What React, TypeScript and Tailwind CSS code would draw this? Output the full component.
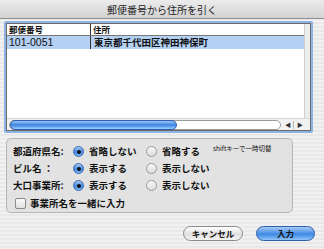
import React from 'react';

const Radio: React.FC<{ checked?: boolean; label: string }> = ({ checked, label }) => (
  <div className="flex items-center gap-[5px] whitespace-nowrap">
    {checked ? (
      <span className="flex h-[11px] w-[11px] shrink-0 items-center justify-center rounded-full border border-[#3a68b0] bg-[linear-gradient(#a9cdf5,#3f86e0_55%,#7fb8f5)]">
        <span className="h-[4px] w-[4px] rounded-full bg-[#111]" />
      </span>
    ) : (
      <span className="h-[11px] w-[11px] shrink-0 rounded-full border border-[#9a9a9a] bg-[linear-gradient(#f8f8f8,#dcdcdc)]" />
    )}
    <span>{label}</span>
  </div>
);

const Row: React.FC<{ label: string; a: string; b: string; checkedFirst?: boolean; note?: string }> = ({
  label,
  a,
  b,
  checkedFirst = true,
  note,
}) => (
  <div className="flex h-[17px] items-center whitespace-nowrap">
    <span className="w-[60px]">{label}</span>
    <div className="w-[73px]">
      <Radio checked={checkedFirst} label={a} />
    </div>
    <div className="w-[67px]">
      <Radio label={b} />
    </div>
    {note && <span className="-mt-[6px] text-[6.5px] font-normal">{note}</span>}
  </div>
);

export default function App() {
  return (
    <div
      className="flex h-[249px] w-[324px] flex-col overflow-hidden bg-[repeating-linear-gradient(#f1f1f1_0px,#f1f1f1_2px,#e9e9e9_2px,#e9e9e9_4px)] text-[#111]"
      style={{ fontFamily: '"Noto Sans CJK JP", "Noto Sans", sans-serif' }}
    >
      {/* title bar */}
      <div className="flex h-[19px] shrink-0 items-center justify-center border-b border-[#8f8f8f] bg-[linear-gradient(#ececec,#d2d2d2)] text-[10px] text-[#222]">
        郵便番号から住所を引く
      </div>

      {/* list */}
      <div className="ml-[4px] mt-[2px] h-[112px] w-[309px] rounded-[2px] border-2 border-[#8db2e3] bg-white">
        <div className="flex h-full flex-col border border-[#6b6b6b]">
          <div className="flex min-h-0 flex-1">
            <div className="flex-1 bg-white">
              <div className="flex h-[12px] border-b border-[#777] text-[8.5px] font-bold leading-[11px]">
                <span className="w-[84px] border-r border-[#333] pl-[2px]">郵便番号</span>
                <span className="pl-[2px]">住所</span>
              </div>
              <div className="flex h-[13px] bg-[#b4d0f3] leading-[13px]">
                <span className="w-[84px] border-r border-[#333] pl-[2px] font-['Liberation_Sans'] text-[10.5px]">
                  101-0051
                </span>
                <span className="pl-[3px] text-[9.5px] font-bold">東京都千代田区神田神保町</span>
              </div>
            </div>
            <div className="w-[6px] border-l border-[#d0d0d0] bg-[#ececec]" />
          </div>
          <div className="flex h-[12px] items-center border-t border-[#d6d6d6] bg-[#f2f2f2] pl-[2px]">
            <div className="flex h-[10px] w-[272px] items-center rounded-full border border-[#9b9b9b] bg-white">
              <div className="h-[10px] w-[167px] rounded-full border border-[#2d5fb0] bg-[linear-gradient(#9cc6f4,#3b84e2_50%,#9fd0ff)]" />
            </div>
            <span className="ml-[4px] text-[6px] leading-none text-[#333]">◀</span>
            <span className="ml-[2px] h-[8px] border-l border-[#bbb]" />
            <span className="ml-[3px] text-[6px] leading-none text-[#333]">▶</span>
          </div>
        </div>
      </div>

      {/* options group */}
      <div className="ml-[6px] mt-[5px] h-[75px] w-[287px] rounded-[5px] border border-[#b5b5b5] bg-[#e2e2e2] pl-[6px] pt-[4px] text-[9.5px] font-bold">
        <Row label="都道府県名:" a="省略しない" b="省略する" note="shiftキーで一時切替" />
        <Row label="ビル名 ：" a="表示する" b="表示しない" />
        <Row label="大口事業所:" a="表示する" b="表示しない" />
        <div className="flex h-[19px] items-center gap-[4px] pl-[2px]">
          <span className="h-[11px] w-[11px] rounded-[2px] border border-[#8a8a8a] bg-[linear-gradient(#fbfbfb,#dedede)]" />
          <span>事業所名を一緒に入力</span>
        </div>
      </div>

      {/* buttons */}
      <div className="mt-[13px] flex gap-[13px] pl-[183px]">
        <button className="flex h-[15px] w-[60px] items-center justify-center rounded-full border border-[#8a8a8a] bg-[linear-gradient(#ffffff,#e0e0e0_55%,#f5f5f5)] text-[8.5px] font-bold">
          キャンセル
        </button>
        <button className="flex h-[15px] w-[59px] items-center justify-center rounded-full border border-[#2f5ea8] bg-[linear-gradient(#a7cdf6,#3f89e4_55%,#8fc4fb)] text-[8.5px] font-bold">
          入力
        </button>
      </div>
    </div>
  );
}
